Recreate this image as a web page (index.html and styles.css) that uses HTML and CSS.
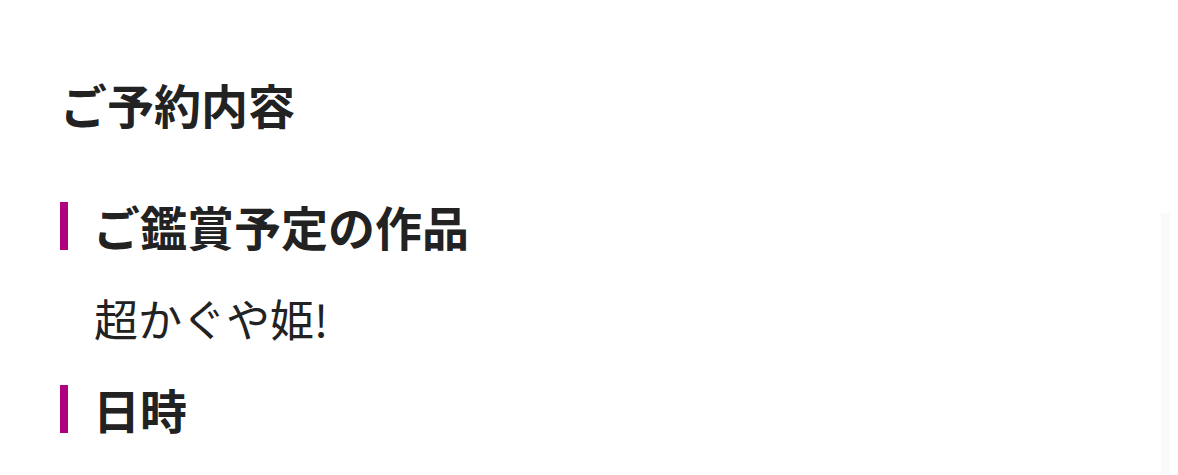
FILE: index.html
```html
<!DOCTYPE html>
<html lang="ja">
<head>
<meta charset="utf-8">
<link rel="stylesheet" href="styles.css">
</head>
<body>
<main class="page">
  <h1 class="title">ご予約内容</h1>
  <section class="item">
    <h2 class="label">ご鑑賞予定の作品</h2>
    <p class="value">超かぐや姫!</p>
  </section>
  <section class="item">
    <h2 class="label">日時</h2>
  </section>
</main>
<div class="track"></div>
</body>
</html>
```
FILE: styles.css
```css
html, body {
  margin: 0;
  padding: 0;
  background: #ffffff;
  height: 100%;
  overflow: hidden;
}
body {
  font-family: "Noto Sans CJK JP", "Noto Sans", sans-serif;
  color: #222222;
}
.page {
  padding: 74px 0 0 60px;
}
.title {
  margin: 0;
  font-size: 47px;
  line-height: 60px;
  font-weight: 700;
}
.item {
  margin-top: 68px;
}
.item + .item {
  margin-top: 43px;
}
.label {
  margin: 0;
  border-left: 8px solid #ae0080;
  padding-left: 25px;
  font-size: 47px;
  line-height: 48px;
  font-weight: 700;
}
.value {
  margin: 44px 0 0 34px;
  font-size: 44px;
  line-height: 48px;
  font-weight: 400;
}
.track {
  position: absolute;
  left: 1161px;
  top: 213px;
  width: 9px;
  bottom: 0;
  background: #fafafa;
}
```
